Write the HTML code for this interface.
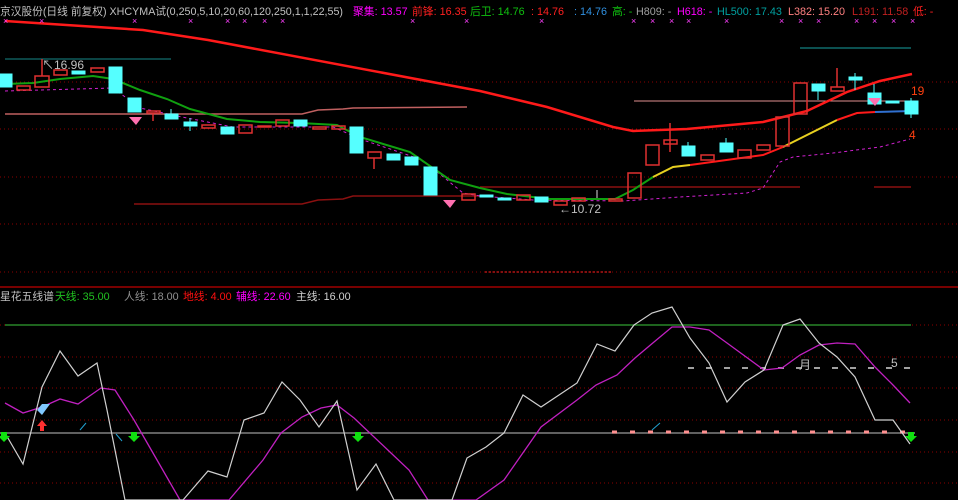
<!DOCTYPE html>
<html><head><meta charset="utf-8"><style>
html,body{margin:0;padding:0;background:#000;width:958px;height:500px;overflow:hidden}
svg{display:block}
text{font-family:"Liberation Sans","Noto Sans CJK SC",sans-serif;font-size:12px}
.h{font-size:10.8px}
</style></head><body>
<svg width="958" height="500" viewBox="0 0 958 500" xmlns="http://www.w3.org/2000/svg">
<rect width="958" height="500" fill="#000"/>
<g stroke="#8b0000" stroke-dasharray="1,3" stroke-width="1">
<line x1="0" y1="82" x2="958" y2="82"/><line x1="0" y1="129" x2="958" y2="129"/>
<line x1="0" y1="177" x2="958" y2="177"/><line x1="0" y1="224" x2="958" y2="224"/>
<line x1="0" y1="272" x2="958" y2="272"/>
<line x1="0" y1="325" x2="958" y2="325"/><line x1="0" y1="357" x2="958" y2="357"/>
<line x1="0" y1="388" x2="958" y2="388"/><line x1="0" y1="420" x2="958" y2="420"/>
<line x1="0" y1="452" x2="958" y2="452"/><line x1="0" y1="483" x2="958" y2="483"/>
</g>
<line x1="485" y1="272" x2="613" y2="272" stroke="#ff2020" stroke-dasharray="2,2"/>
<line x1="0" y1="287" x2="958" y2="287" stroke="#a00000" stroke-width="1.5"/>
<line x1="5" y1="59" x2="171" y2="59" stroke="#0f5a5a" stroke-width="1.5"/>
<line x1="800" y1="48" x2="911" y2="48" stroke="#0f6a6a" stroke-width="1.5"/>
<polyline points="5,114 302,114 318,110 343,109 353,108 467,107" fill="none" stroke="#c06060" stroke-width="1.5"/>
<line x1="634" y1="101" x2="911" y2="101" stroke="#e09090" stroke-width="1"/>
<polyline points="134,204 302,204 318,200 343,199 353,196 480,196" fill="none" stroke="#8b1010" stroke-width="1.5"/>
<line x1="480" y1="187" x2="800" y2="187" stroke="#8b1010" stroke-width="1.5"/>
<line x1="874" y1="187" x2="911" y2="187" stroke="#8b1010" stroke-width="1.5"/>
<polyline points="5,21 143,30 208,40 480,91 547,107 613,127 633,131 687,129 763,122 787,116 807,111 847,92 880,81 912,74" fill="none" stroke="#ff1a1a" stroke-width="2.5"/>
<polyline points="5,91 113,88 140,108 187,118 233,127 333,127 363,140 417,158 430,166 463,193 480,196 533,200 623,201 680,197 747,193 763,188 780,162 793,157 833,153 880,147 910,139" fill="none" stroke="#d020d0" stroke-width="1" stroke-dasharray="3,3"/>
<polyline points="5,84 33,83 60,79 93,76 113,79 140,90 167,99 190,109 227,119 260,122 300,123 337,125 360,137 410,152 450,180 480,188 507,194 550,199 615,199 633,190 653,177" fill="none" stroke="#10a010" stroke-width="2"/>
<polyline points="653,177 673,167 690,165" fill="none" stroke="#e8d020" stroke-width="2"/>
<polyline points="690,165 763,155 783,147" fill="none" stroke="#ff1a1a" stroke-width="2"/>
<polyline points="783,147 803,137 837,120" fill="none" stroke="#e8d020" stroke-width="2"/>
<polyline points="837,120 857,113 875,112" fill="none" stroke="#ff1a1a" stroke-width="2"/>
<polyline points="875,112 912,111" fill="none" stroke="#3070d0" stroke-width="2"/>
<g fill="#55ffff" stroke="#55ffff">
<rect x="0" y="74" width="12" height="13"/><rect x="72" y="71" width="13" height="3"/>
<rect x="109" y="67" width="13" height="26"/><rect x="128" y="98" width="13" height="14"/>
<rect x="165" y="114" width="13" height="5"/><rect x="184" y="122" width="13" height="4"/>
<rect x="221" y="127" width="13" height="7"/><rect x="294" y="120" width="13" height="6"/>
<rect x="350" y="127" width="13" height="26"/><rect x="387" y="154" width="13" height="6"/>
<rect x="405" y="157" width="13" height="8"/><rect x="424" y="167" width="13" height="28"/>
<rect x="480" y="195" width="13" height="2"/><rect x="498" y="198" width="13" height="2"/>
<rect x="535" y="197" width="13" height="5"/><rect x="682" y="146" width="13" height="10"/>
<rect x="720" y="143" width="13" height="9"/><rect x="812" y="84" width="13" height="7"/>
<rect x="849" y="77" width="13" height="3"/><rect x="868" y="93" width="13" height="11"/>
<rect x="886" y="101" width="13" height="2"/><rect x="905" y="101" width="13" height="13"/>
<line x1="171" y1="109" x2="171" y2="119"/><line x1="190" y1="118" x2="190" y2="131"/>
<line x1="818" y1="84" x2="818" y2="100"/><line x1="855" y1="73" x2="855" y2="90"/>
<line x1="874" y1="84" x2="874" y2="93"/><line x1="911" y1="98" x2="911" y2="118"/>
<line x1="726" y1="138" x2="726" y2="152"/><line x1="688" y1="142" x2="688" y2="156"/>
</g>
<g fill="none" stroke="#e03030" stroke-width="1.5">
<rect x="17" y="86" width="13" height="4"/><rect x="35" y="76" width="14" height="11"/>
<line x1="42" y1="59" x2="42" y2="76"/>
<rect x="54" y="70" width="13" height="5"/><rect x="91" y="68" width="13" height="4"/>
<rect x="147" y="111" width="13" height="2"/><line x1="153" y1="113" x2="153" y2="121"/>
<rect x="202" y="125" width="13" height="3"/><rect x="239" y="125" width="13" height="8"/>
<rect x="258" y="126" width="13" height="1"/><rect x="276" y="120" width="13" height="6"/>
<rect x="313" y="127" width="13" height="2"/><rect x="332" y="126" width="13" height="3"/>
<rect x="368" y="152" width="13" height="6"/><line x1="374" y1="158" x2="374" y2="169"/>
<rect x="462" y="194" width="13" height="6"/><rect x="517" y="195" width="13" height="5"/>
<rect x="554" y="201" width="13" height="4"/><rect x="572" y="198" width="13" height="3"/>
<rect x="609" y="199" width="13" height="2"/><rect x="628" y="173" width="13" height="25"/>
<rect x="646" y="145" width="13" height="20"/><rect x="664" y="140" width="13" height="4"/>
<line x1="670" y1="123" x2="670" y2="152"/><rect x="701" y="155" width="13" height="5"/>
<rect x="738" y="150" width="13" height="8"/><rect x="757" y="145" width="13" height="5"/>
<rect x="776" y="117" width="13" height="29"/><rect x="794" y="83" width="13" height="31"/>
<rect x="831" y="87" width="13" height="4"/><line x1="837" y1="68" x2="837" y2="87"/>
</g>
<line x1="597" y1="190" x2="597" y2="198" stroke="#ddd"/>
<g fill="#ff70b0"><path d="M129,117 h13 l-6,8z"/><path d="M443,200 h13 l-6,8z"/><path d="M868,98 h13 l-6,8z"/></g>
<text x="42" y="69" fill="#c0c0c0">↖16.96</text>
<text x="559" y="213" fill="#c0c0c0">←10.72</text>
<text x="911" y="95" fill="#ff4010">19</text>
<text x="909" y="139" fill="#ff4010">4</text>
<text x="0" y="15" fill="#c0c0c0" textLength="343" lengthAdjust="spacingAndGlyphs" class="h">京汉股份(日线 前复权) XHCYMA试(0,250,5,10,20,60,120,250,1,1,22,55)</text>
<text x="353" y="15" fill="#ff00ff" class="h">聚集: 13.57</text>
<text x="412" y="15" fill="#ff2020" class="h">前锋: 16.35</text>
<text x="470" y="15" fill="#10c010" class="h">后卫: 14.76</text>
<text x="531" y="15" fill="#ff2020" class="h">: 14.76</text>
<text x="574" y="15" fill="#3090e0" class="h">: 14.76</text>
<text x="612" y="15" fill="#10c010" class="h">高: -</text>
<text x="636" y="15" fill="#a0a0a0" class="h">H809: -</text>
<text x="677" y="15" fill="#ff00ff" class="h">H618: -</text>
<text x="717" y="15" fill="#00a0a0" class="h">HL500: 17.43</text>
<text x="788" y="15" fill="#ff8080" class="h">L382: 15.20</text>
<text x="852" y="15" fill="#c02020" class="h">L191: 11.58</text>
<text x="913" y="15" fill="#ff2020" class="h">低: -</text>
<g fill="#ff40ff"><text x="3" y="24" style="font-size:9px">×</text><text x="39" y="24" style="font-size:9px">×</text><text x="132" y="24" style="font-size:9px">×</text><text x="188" y="24" style="font-size:9px">×</text><text x="225" y="24" style="font-size:9px">×</text><text x="242" y="24" style="font-size:9px">×</text><text x="262" y="24" style="font-size:9px">×</text><text x="280" y="24" style="font-size:9px">×</text><text x="410" y="24" style="font-size:9px">×</text><text x="464" y="24" style="font-size:9px">×</text><text x="539" y="24" style="font-size:9px">×</text><text x="631" y="24" style="font-size:9px">×</text><text x="650" y="24" style="font-size:9px">×</text><text x="669" y="24" style="font-size:9px">×</text><text x="686" y="24" style="font-size:9px">×</text><text x="724" y="24" style="font-size:9px">×</text><text x="779" y="24" style="font-size:9px">×</text><text x="798" y="24" style="font-size:9px">×</text><text x="816" y="24" style="font-size:9px">×</text><text x="854" y="24" style="font-size:9px">×</text><text x="872" y="24" style="font-size:9px">×</text><text x="891" y="24" style="font-size:9px">×</text><text x="910" y="24" style="font-size:9px">×</text></g>
<text x="0" y="300" fill="#c0c0c0" class="h">星花五线谱</text>
<text x="55" y="300" fill="#20c020" class="h">天线: 35.00</text>
<text x="124" y="300" fill="#909090" class="h">人线: 18.00</text>
<text x="183" y="300" fill="#ff1010" class="h">地线: 4.00</text>
<text x="236" y="300" fill="#ff00ff" class="h">辅线: 22.60</text>
<text x="296" y="300" fill="#d0d0d0" class="h">主线: 16.00</text>
<line x1="5" y1="325" x2="911" y2="325" stroke="#30a030" stroke-width="1.2"/>
<line x1="0" y1="433" x2="915" y2="433" stroke="#808080" stroke-width="1.5"/>
<line x1="688" y1="368" x2="918" y2="368" stroke="#a0a0a0" stroke-width="2" stroke-dasharray="6,12"/>
<line x1="612" y1="432" x2="915" y2="432" stroke="#ff9090" stroke-width="3" stroke-dasharray="5,13"/>
<text x="799" y="369" fill="#c0c0c0">月</text><text x="891" y="367" fill="#c0c0c0">5</text>
<polyline points="5,403 23,413 42,407 60,399 78,404 101,388 115,390 134,420 153,453 180,500 229,500 263,460 281,433 302,417 321,408 337,405 354,418 391,453 409,470 428,500 476,500 504,480 541,427 577,400 596,385 617,375 635,358 654,342 672,327 690,327 709,330 727,343 764,370 782,368 800,355 819,345 837,343 855,344 875,367 893,385 910,403" fill="none" stroke="#c020c0" stroke-width="1.3"/>
<polyline points="5,433 23,464 42,387 60,351 78,376 97,363 107,410 125,500 183,500 208,471 227,477 244,420 264,413 282,382 300,400 319,427 337,401 357,490 376,464 394,500 452,500 467,458 486,447 504,433 523,395 541,407 559,395 577,383 597,344 615,351 634,325 652,313 672,307 690,338 709,363 727,402 745,382 764,370 783,325 800,319 819,343 837,357 855,377 875,420 893,420 910,444" fill="none" stroke="#d0d0d0" stroke-width="1.2"/>
<g fill="#10e010"><path d="M1,432 h6 v4 h3 l-6,6 l-6,-6 h3z"/><path d="M131,432 h6 v4 h3 l-6,6 l-6,-6 h3z"/><path d="M355,432 h6 v4 h3 l-6,6 l-6,-6 h3z"/><path d="M908,432 h6 v4 h3 l-6,6 l-6,-6 h3z"/></g>
<path d="M42,420 l-5,6 h3 v5 h4 v-5 h3z" fill="#ff3030"/>
<path d="M37,410 l5,-6 l8,0 l-8,11z" fill="#80c8ff"/>
<g stroke="#20a0d0" stroke-width="1"><line x1="80" y1="430" x2="86" y2="423"/><line x1="116" y1="434" x2="122" y2="441"/><line x1="652" y1="430" x2="660" y2="423"/></g>
</svg>
</body></html>
